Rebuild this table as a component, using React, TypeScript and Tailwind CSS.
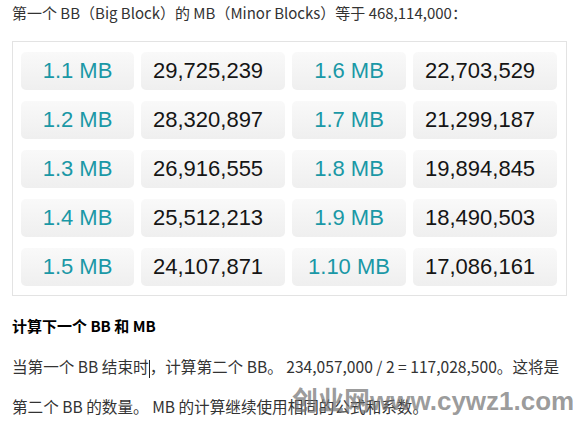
import React from 'react';

const rows: [string, string, string, string][] = [
  ['1.1 MB', '29,725,239', '1.6 MB', '22,703,529'],
  ['1.2 MB', '28,320,897', '1.7 MB', '21,299,187'],
  ['1.3 MB', '26,916,555', '1.8 MB', '19,894,845'],
  ['1.4 MB', '25,512,213', '1.9 MB', '18,490,503'],
  ['1.5 MB', '24,107,871', '1.10 MB', '17,086,161'],
];

const cjk = { fontFamily: '"Noto Sans CJK SC", "Noto Sans", sans-serif' };
const latin = { fontFamily: '"Liberation Sans", Arial, sans-serif' };

function Label({ text }: { text: string }) {
  return (
    <div
      className="h-[38px] flex items-center justify-center rounded-[5px] bg-gradient-to-b from-[#f9f9f9] to-[#efefef] text-[22px] text-[#1a98a6] leading-none"
      style={latin}
    >
      {text}
    </div>
  );
}

function Value({ text }: { text: string }) {
  return (
    <div
      className="h-[38px] flex items-center pl-3 rounded-[5px] bg-gradient-to-b from-[#f9f9f9] to-[#efefef] text-[22px] text-[#151515] leading-none"
      style={latin}
    >
      {text}
    </div>
  );
}

export default function App() {
  return (
    <div className="relative w-[576px] h-[421px] overflow-hidden bg-white px-3 text-[15px] text-[#333]" style={cjk}>
      <p className="leading-[26px]">
        第一个 BB（Big Block）的 MB（Minor Blocks）等于 468,114,000：
      </p>

      <div className="mt-[15px] w-[555px] border border-[#e3e3e3] pt-[10px] pb-[9px] px-[8px]">
        <div className="grid grid-cols-[113px_144px_114px_144px] gap-x-[7px] gap-y-[11px]">
          {rows.map((r) => (
            <React.Fragment key={r[0]}>
              <Label text={r[0]} />
              <Value text={r[1]} />
              <Label text={r[2]} />
              <Value text={r[3]} />
            </React.Fragment>
          ))}
        </div>
      </div>

      <h3 className="mt-[17px] leading-[26px] font-bold text-black">计算下一个 BB 和 MB</h3>

      <div className="mt-[7px] leading-[40px] whitespace-nowrap text-[15.6px]">
        <div>
          当第一个 BB 结束时
          <span className="inline-block w-px h-[18px] bg-[#222] align-middle" />
          ，计算第二个 BB。 234,057,000 / 2 = 117,028,500。这将是
        </div>
        <div>第二个 BB 的数量。 MB 的计算继续使用相同的公式和系数。</div>
      </div>

      <div
        className="absolute left-[292px] top-[386px] whitespace-nowrap text-[26px] font-bold text-[#707070]/70 leading-none"
        style={latin}
      >
        <span style={cjk}>创业网</span>www.cywz1.com
      </div>
    </div>
  );
}
